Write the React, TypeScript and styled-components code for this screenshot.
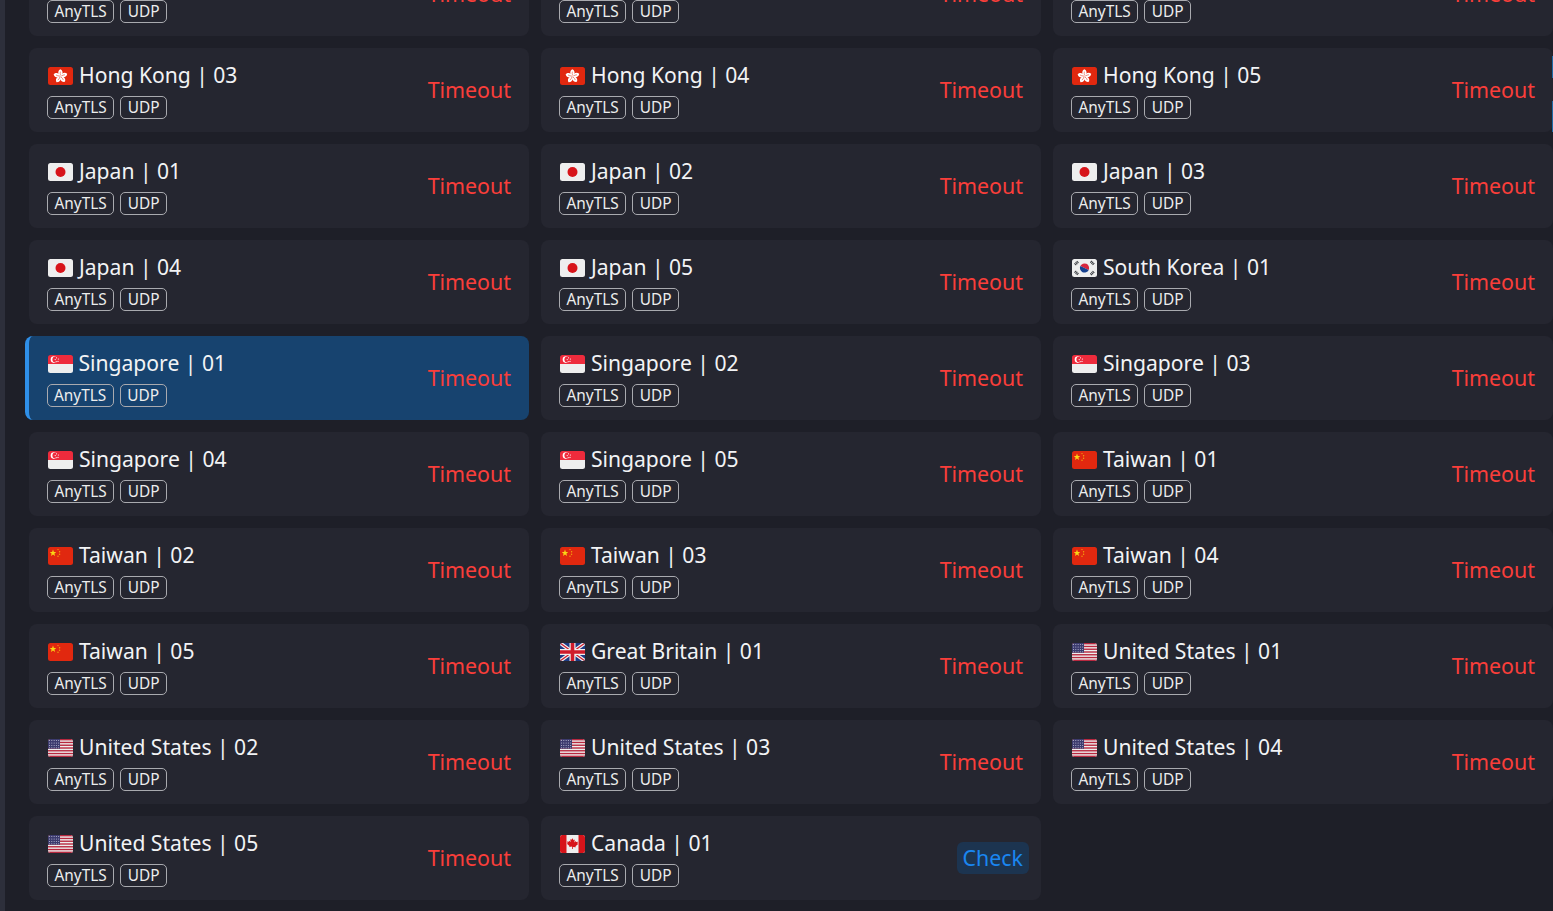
import React from 'react';
import styled, { createGlobalStyle } from 'styled-components';

const GlobalStyle = createGlobalStyle`
  html, body {
    margin: 0;
    padding: 0;
    height: 100%;
    overflow: hidden;
    background: #1e1f28;
    font-family: "Noto Sans", "Liberation Sans", sans-serif;
  }
`;

const Page = styled.div`
  position: relative;
  display: flex;
  height: 911px;
  overflow: hidden;
  background: #1e1f28;
`;

const SideEdge = styled.div`
  flex: 0 0 5px;
  background: #2d2f3b;
`;

const ProxyGrid = styled.div`
  flex: 1;
  display: grid;
  grid-template-columns: repeat(3, 500px);
  grid-auto-rows: 84px;
  gap: 12px;
  margin-top: -48px;
  padding-left: 24px;
  align-content: start;
`;

const Card = styled.div<{ $selected?: boolean }>`
  display: flex;
  align-items: center;
  justify-content: space-between;
  box-sizing: border-box;
  padding: 0 12px 0 ${({ $selected }) => ($selected ? '17.5px' : '18px')};
  margin-left: ${({ $selected }) => ($selected ? '-4px' : '0')};
  border-left: ${({ $selected }) => ($selected ? '4px solid #2f8fe8' : 'none')};
  border-radius: 8px;
  background: ${({ $selected }) => ($selected ? '#17436f' : '#252630')};
`;

const Info = styled.div`
  display: flex;
  flex-direction: column;
  gap: 6px;
  padding-bottom: 2px;
`;

const NameRow = styled.div`
  display: flex;
  align-items: center;
  gap: 6px;
  height: 30px;
  font-size: 21.1px;
  color: #f2f3f5;
  white-space: nowrap;
`;

const TagRow = styled.div`
  display: flex;
  gap: 6px;
`;

const Tag = styled.span`
  box-sizing: border-box;
  height: 23px;
  padding: 0 6.5px;
  display: flex;
  align-items: center;
  border: 1px solid #a9aaaf;
  border-radius: 5px;
  font-size: 15.4px;
  color: #eceded;
`;

const Status = styled.div<{ $check?: boolean }>`
  box-sizing: border-box;
  height: 32px;
  padding: 0 6px 2px;
  display: flex;
  align-items: center;
  border-radius: 6px;
  font-size: 21.4px;
  color: ${({ $check }) => ($check ? '#1a86f0' : '#fa3e3a')};
  background: ${({ $check }) => ($check ? '#1c3450' : 'transparent')};
`;

const FlagSvg = styled.svg`
  display: block;
  flex: none;
  width: 25px;
  height: 18px;
  margin: 2px 0 0 1px;
`;

const EdgeMark = styled.div<{ $top: number; $height: number }>`
  position: absolute;
  right: 0;
  top: ${({ $top }) => $top}px;
  width: 1px;
  height: ${({ $height }) => $height}px;
  background: #1d6aa5;
`;

type Code = 'hk' | 'jp' | 'kr' | 'sg' | 'tw' | 'gb' | 'us' | 'ca';

const Flag = ({ code }: { code: Code }) => {
  const id = `clip-${code}`;
  return (
    <FlagSvg viewBox="0 0 25 18">
      <defs>
        <clipPath id={id}>
          <rect width="25" height="18" rx="2.5" />
        </clipPath>
      </defs>
      <g clipPath={`url(#${id})`}>
        {code === 'hk' && (
          <>
            <rect width="25" height="18" fill="#e1280f" />
            {[0, 72, 144, 216, 288].map((a) => (
              <g key={a} transform={`rotate(${a} 12.5 9.300)`}>
                <path d="M12.500 9.300C9.700 7.600 9.500 3.800 12.200 2.200C15.200 3.400 15.400 7.200 12.500 9.300Z" fill="#fff" />
                <path d="M12.500 8.600C12.100 7.200 12.100 5.800 12.400 4.600" stroke="#e1280f" strokeWidth=".5" fill="none" />
              </g>
            ))}
          </>
        )}
        {code === 'jp' && (
          <>
            <rect width="25" height="18" fill="#eeeeee" />
            <circle cx="12.5" cy="9" r="5" fill="#d7141a" />
          </>
        )}
        {code === 'kr' && (
          <>
            <rect width="25" height="18" fill="#eeeeee" />
            <path d="M7.9 9a4.6 4.6 0 0 1 9.2 0Z" fill="#d7263d" transform="rotate(25 12.5 9)" />
            <path d="M7.9 9a4.6 4.6 0 0 0 9.2 0Z" fill="#17418f" transform="rotate(25 12.5 9)" />
            <g stroke="#33363b" strokeWidth="2.6" strokeDasharray="1 .6">
              <path d="M3 5.6L6.2 2.4" />
              <path d="M18.8 2.4L22 5.6" />
              <path d="M3 12.4L6.2 15.6" />
              <path d="M18.8 15.6L22 12.4" />
            </g>
          </>
        )}
        {code === 'sg' && (
          <>
            <rect width="25" height="9" fill="#ee2b3c" />
            <rect y="9" width="25" height="9" fill="#eeeeee" />
            <circle cx="6" cy="4.6" r="3.3" fill="#fff" />
            <circle cx="7.4" cy="4.6" r="3" fill="#ee2b3c" />
            <circle cx="8.5" cy="2.8" r=".6" fill="#fff" />
            <circle cx="10.4" cy="4" r=".6" fill="#fff" />
            <circle cx="7.2" cy="4.6" r=".6" fill="#fff" />
            <circle cx="8.2" cy="6.6" r=".6" fill="#fff" />
            <circle cx="10" cy="6.4" r=".6" fill="#fff" />
          </>
        )}
        {code === 'tw' && (
          <>
            <rect width="25" height="18" fill="#e1280f" />
            <path d="M5 2.6l.9 2.3 2.4.1-1.9 1.5.7 2.4L5 7.5 3 8.9l.6-2.4L1.700 5l2.400-.1Z" fill="#f9d616" />
            <circle cx="10" cy="2.600" r=".7" fill="#f3a30f" />
            <circle cx="11.600" cy="4.700" r=".7" fill="#f3a30f" />
            <circle cx="11.600" cy="7.200" r=".7" fill="#f3a30f" />
            <circle cx="10" cy="9.300" r=".7" fill="#f3a30f" />
          </>
        )}
        {code === 'gb' && (
          <>
            <rect width="25" height="18" fill="#1c3a84" />
            <path d="M0 0L25 18M25 0L0 18" stroke="#eeeeee" strokeWidth="3.600" />
            <path d="M0 0L25 18M25 0L0 18" stroke="#cf1b2b" strokeWidth="1.200" />
            <path d="M12.500 0V18M0 9H25" stroke="#eeeeee" strokeWidth="6" />
            <path d="M12.500 0V18M0 9H25" stroke="#cf1b2b" strokeWidth="3.600" />
          </>
        )}
        {code === 'us' && (
          <>
            <rect width="25" height="18" fill="#eeeeee" />
            {[0, 2.77, 5.54, 8.31, 11.08, 13.85, 16.62].map((y) => (
              <rect key={y} y={y} width="25" height="1.38" fill="#b8283f" />
            ))}
            <rect width="12" height="9.700" fill="#3c3b6e" />
            {[1.600, 4, 6.400, 8.800].map((y) =>
              [1.500, 3.800, 6.100, 8.400, 10.700].map((x) => (
                <circle key={`${x}-${y}`} cx={x} cy={y} r=".5" fill="#c9cbe0" />
              ))
            )}
          </>
        )}
        {code === 'ca' && (
          <>
            <rect width="25" height="18" fill="#eeeeee" />
            <rect width="6.500" height="18" fill="#d7141a" />
            <rect x="18.500" width="6.500" height="18" fill="#d7141a" />
            <path d="M12.500 3.200l1.100 2 1.200-.6-.5 2.800 1.500-1.300.4 1 1.700-.3-.5 1.800.8.500-2.700 2.200.3 1-2.900-.4V14h-.8v-2.500l-2.900.4.300-1-2.700-2.200.8-.5-.5-1.800 1.700.3.4-1 1.500 1.300-.5-2.800 1.200.6Z" fill="#d7141a" />
          </>
        )}
      </g>
    </FlagSvg>
  );
};

type Proxy = { code: Code; name: string; selected?: boolean; check?: boolean };

const proxies: Proxy[] = [
  { code: 'hk', name: 'Hong Kong | 00' },
  { code: 'hk', name: 'Hong Kong | 01' },
  { code: 'hk', name: 'Hong Kong | 02' },
  { code: 'hk', name: 'Hong Kong | 03' },
  { code: 'hk', name: 'Hong Kong | 04' },
  { code: 'hk', name: 'Hong Kong | 05' },
  { code: 'jp', name: 'Japan | 01' },
  { code: 'jp', name: 'Japan | 02' },
  { code: 'jp', name: 'Japan | 03' },
  { code: 'jp', name: 'Japan | 04' },
  { code: 'jp', name: 'Japan | 05' },
  { code: 'kr', name: 'South Korea | 01' },
  { code: 'sg', name: 'Singapore | 01', selected: true },
  { code: 'sg', name: 'Singapore | 02' },
  { code: 'sg', name: 'Singapore | 03' },
  { code: 'sg', name: 'Singapore | 04' },
  { code: 'sg', name: 'Singapore | 05' },
  { code: 'tw', name: 'Taiwan | 01' },
  { code: 'tw', name: 'Taiwan | 02' },
  { code: 'tw', name: 'Taiwan | 03' },
  { code: 'tw', name: 'Taiwan | 04' },
  { code: 'tw', name: 'Taiwan | 05' },
  { code: 'gb', name: 'Great Britain | 01' },
  { code: 'us', name: 'United States | 01' },
  { code: 'us', name: 'United States | 02' },
  { code: 'us', name: 'United States | 03' },
  { code: 'us', name: 'United States | 04' },
  { code: 'us', name: 'United States | 05' },
  { code: 'ca', name: 'Canada | 01', check: true },
];

const App: React.FC = () => (
  <>
    <GlobalStyle />
    <Page>
      <SideEdge />
      <ProxyGrid>
        {proxies.map((proxy) => (
          <Card key={proxy.name} $selected={proxy.selected}>
            <Info>
              <NameRow>
                <Flag code={proxy.code} />
                {proxy.name}
              </NameRow>
              <TagRow>
                <Tag>AnyTLS</Tag>
                <Tag>UDP</Tag>
              </TagRow>
            </Info>
            <Status $check={proxy.check}>{proxy.check ? 'Check' : 'Timeout'}</Status>
          </Card>
        ))}
      </ProxyGrid>
      <EdgeMark $top={56} $height={22} />
      <EdgeMark $top={101} $height={31} />
    </Page>
  </>
);

export default App;
